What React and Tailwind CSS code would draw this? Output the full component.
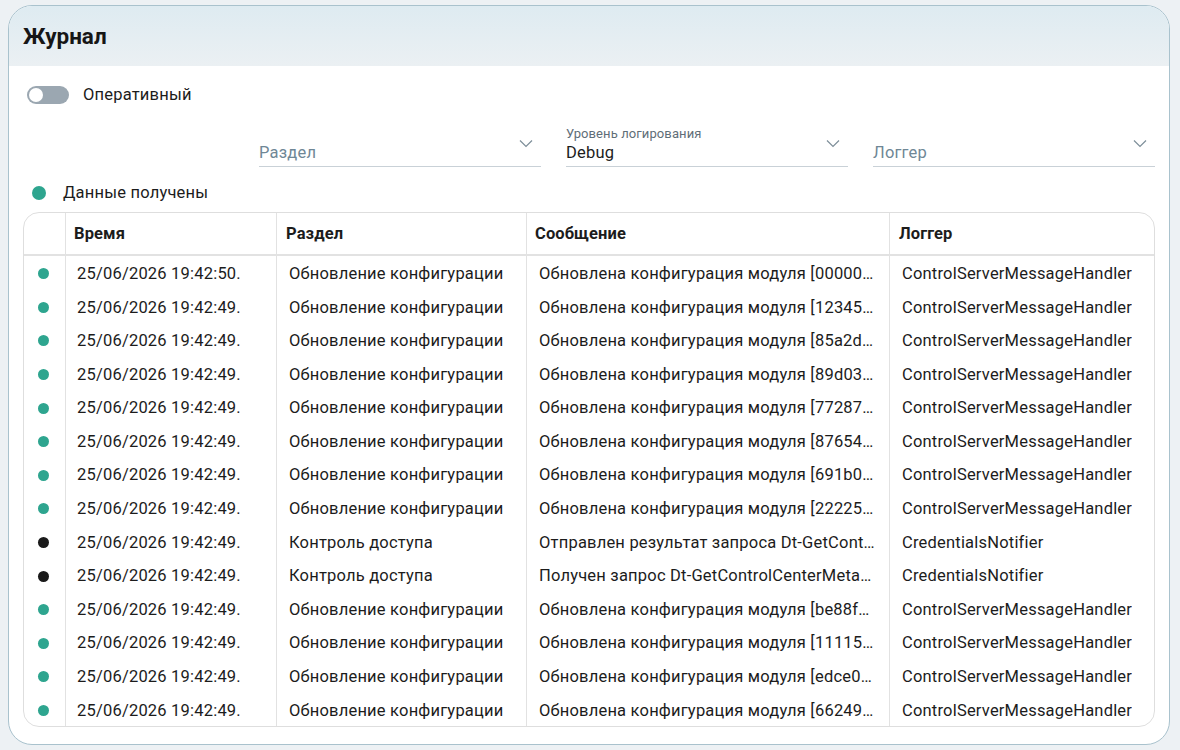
import React from "react";

const rows = [
  { c: "teal", t: "25/06/2026 19:42:50.", s: "Обновление конфигурации", m: "Обновлена конфигурация модуля [00000…", l: "ControlServerMessageHandler" },
  { c: "teal", t: "25/06/2026 19:42:49.", s: "Обновление конфигурации", m: "Обновлена конфигурация модуля [12345…", l: "ControlServerMessageHandler" },
  { c: "teal", t: "25/06/2026 19:42:49.", s: "Обновление конфигурации", m: "Обновлена конфигурация модуля [85a2d…", l: "ControlServerMessageHandler" },
  { c: "teal", t: "25/06/2026 19:42:49.", s: "Обновление конфигурации", m: "Обновлена конфигурация модуля [89d03…", l: "ControlServerMessageHandler" },
  { c: "teal", t: "25/06/2026 19:42:49.", s: "Обновление конфигурации", m: "Обновлена конфигурация модуля [77287…", l: "ControlServerMessageHandler" },
  { c: "teal", t: "25/06/2026 19:42:49.", s: "Обновление конфигурации", m: "Обновлена конфигурация модуля [87654…", l: "ControlServerMessageHandler" },
  { c: "teal", t: "25/06/2026 19:42:49.", s: "Обновление конфигурации", m: "Обновлена конфигурация модуля [691b0…", l: "ControlServerMessageHandler" },
  { c: "teal", t: "25/06/2026 19:42:49.", s: "Обновление конфигурации", m: "Обновлена конфигурация модуля [22225…", l: "ControlServerMessageHandler" },
  { c: "dark", t: "25/06/2026 19:42:49.", s: "Контроль доступа", m: "Отправлен результат запроса Dt-GetCont…", l: "CredentialsNotifier" },
  { c: "dark", t: "25/06/2026 19:42:49.", s: "Контроль доступа", m: "Получен запрос Dt-GetControlCenterMeta…", l: "CredentialsNotifier" },
  { c: "teal", t: "25/06/2026 19:42:49.", s: "Обновление конфигурации", m: "Обновлена конфигурация модуля [be88f…", l: "ControlServerMessageHandler" },
  { c: "teal", t: "25/06/2026 19:42:49.", s: "Обновление конфигурации", m: "Обновлена конфигурация модуля [11115…", l: "ControlServerMessageHandler" },
  { c: "teal", t: "25/06/2026 19:42:49.", s: "Обновление конфигурации", m: "Обновлена конфигурация модуля [edce0…", l: "ControlServerMessageHandler" },
  { c: "teal", t: "25/06/2026 19:42:49.", s: "Обновление конфигурации", m: "Обновлена конфигурация модуля [66249…", l: "ControlServerMessageHandler" },
];

function Chevron() {
  return (
    <svg width="14" height="9" viewBox="0 0 14 9" fill="none" className="shrink-0">
      <path d="M1 1.5L7 7.5L13 1.5" stroke="#7d8e99" strokeWidth="1.2" />
    </svg>
  );
}

function Select({ label, value }) {
  return (
    <div className="flex h-[46px] w-[282px] items-end border-b border-[#c9d1d7] pb-[2px]">
      <div className="flex min-w-0 flex-1 flex-col">
        {value ? (
          <>
            <span className="text-[13px] leading-[16px] tracking-[0.1px] text-[#5f6e78]">{label}</span>
            <span className="text-[16.5px] leading-[22px] tracking-[0.2px] text-[#1c1c1c]">{value}</span>
          </>
        ) : (
          <span className="text-[16.5px] leading-[22px] tracking-[0.2px] text-[#6f8796]">{label}</span>
        )}
      </div>
      <div className="mb-[16px] mr-[8px]">
        <Chevron />
      </div>
    </div>
  );
}

const cols = "grid grid-cols-[41px_211px_250px_363px_1fr]";

export default function App() {
  return (
    <div
      className="h-[750px] w-[1180px] bg-[#edf1f4] pl-[8px] pr-[10px] pt-[5px] pb-[5px] text-[#1c1c1c]"
      style={{ fontFamily: "Roboto, 'Noto Sans', sans-serif" }}
    >
      <div className="flex h-[740px] flex-col overflow-hidden rounded-[24px] border border-[#a9c2cd] bg-white">
        <div className="flex h-[60px] shrink-0 items-center bg-gradient-to-b from-[#deebf1] to-[#ebf0f3] pl-[14px] pt-[1px]">
          <h1 className="text-[22.5px] font-bold leading-none tracking-[0px] text-[#161616]">Журнал</h1>
        </div>
        <div className="flex flex-1 flex-col px-[14px]">
          <div className="mt-[19px] flex items-center gap-[14px] pl-[4px]">
            <div className="relative h-[18px] w-[42px] rounded-full bg-[#9ba7b1]">
              <div className="absolute left-[2px] top-[2px] h-[14px] w-[14px] rounded-full bg-white" />
            </div>
            <span className="text-[16.5px] leading-[20px] tracking-[0.2px]">Оперативный</span>
          </div>
          <div className="mt-[16px] flex justify-end gap-[25px] pr-[0px]">
            <Select label="Раздел" />
            <Select label="Уровень логирования" value="Debug" />
            <Select label="Логгер" />
          </div>
          <div className="mt-[16px] flex items-center gap-[17px] pl-[9px]">
            <div className="h-[14px] w-[14px] rounded-full bg-[#2ea58f]" />
            <span className="text-[16.5px] leading-[20px] tracking-[0.2px]">Данные получены</span>
          </div>
          <div className="mt-[9px] overflow-hidden rounded-[16px] border border-[#dedede]">
            <div className={`${cols} h-[43px] border-b-2 border-[#e2e2e2] text-[16.5px] font-bold tracking-[0.1px]`}>
              <div />
              <div className="flex items-center border-l border-[#e2e2e2] pl-[8px] pt-[2px]">Время</div>
              <div className="flex items-center border-l border-[#e2e2e2] pl-[9px] pt-[2px]">Раздел</div>
              <div className="flex items-center border-l border-[#e2e2e2] pl-[8px] pt-[2px]">Сообщение</div>
              <div className="flex items-center border-l border-[#e2e2e2] pl-[9px] pt-[2px]">Логгер</div>
            </div>
            {rows.map((r, i) => (
              <div key={i} className={`${cols} h-[33.6px] text-[16.5px] tracking-[0.2px]`}>
                <div className="flex items-center pl-[14px] pt-[2px]">
                  <div className={`h-[11px] w-[11px] rounded-full ${r.c === "teal" ? "bg-[#2ea58f]" : "bg-[#1a1a1a]"}`} />
                </div>
                <div className="flex items-center border-l border-[#e2e2e2] pl-[11px] pt-[3px]">
                  <span className="whitespace-nowrap">{r.t}</span>
                </div>
                <div className="flex min-w-0 items-center border-l border-[#e2e2e2] pl-[12px] pt-[3px]">
                  <span className="truncate">{r.s}</span>
                </div>
                <div className="flex min-w-0 items-center border-l border-[#e2e2e2] pl-[12px] pr-[2px] pt-[3px]">
                  <span className="truncate">{r.m}</span>
                </div>
                <div className="flex min-w-0 items-center border-l border-[#e2e2e2] pl-[12px] pt-[3px]">
                  <span className="truncate">{r.l}</span>
                </div>
              </div>
            ))}
          </div>
        </div>
      </div>
    </div>
  );
}
